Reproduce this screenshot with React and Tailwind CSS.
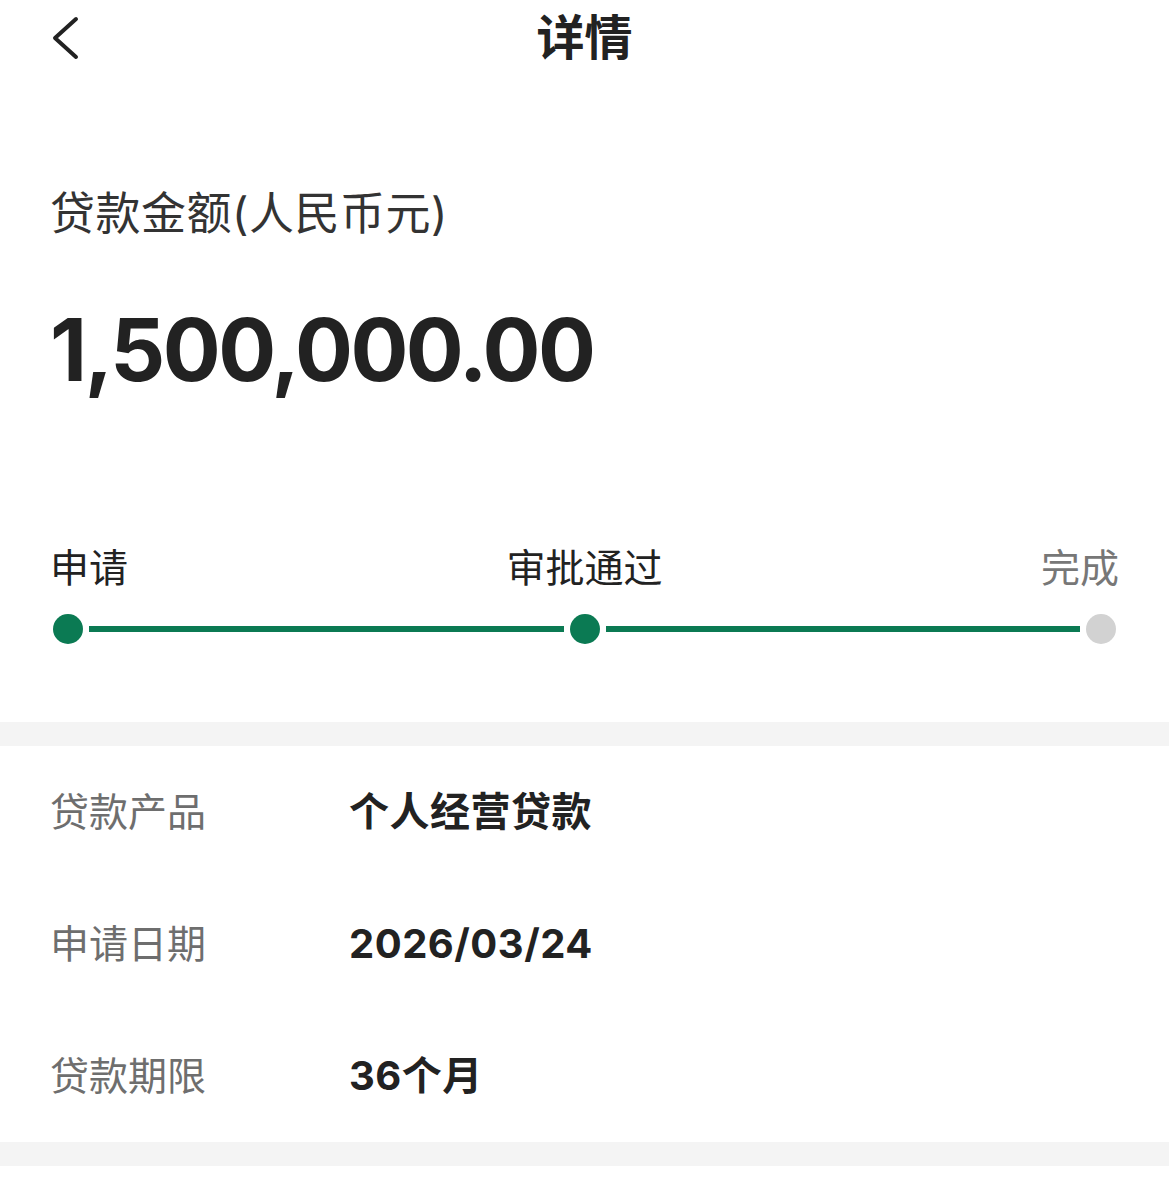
const font = { fontFamily: 'Inter, "Noto Sans CJK SC", sans-serif' }

const rows = [
  { label: '贷款产品', value: '个人经营贷款' },
  { label: '申请日期', value: '2026/03/24' },
  { label: '贷款期限', value: '36个月' },
]

function BackIcon() {
  return (
    <svg width="30" height="44" viewBox="0 0 30 44" fill="none">
      <path d="M26 3 L5 22 L26 41" stroke="#222" strokeWidth="4" strokeLinecap="round" strokeLinejoin="round" />
    </svg>
  )
}

function Dot({ done }) {
  return <div className={`w-[30px] h-[30px] rounded-full shrink-0 ${done ? 'bg-[#0b7a53]' : 'bg-[#d2d2d2]'}`} />
}

function Line() {
  return <div className="flex-1 h-[6px] bg-[#0b7a53]" />
}

export default function App() {
  return (
    <div className="w-[1169px] min-h-[1186px] bg-white text-[#222]" style={font}>
      <header className="h-[76px] grid grid-cols-[1fr_auto_1fr] items-center px-[50px]">
        <div className="flex items-center">
          <BackIcon />
        </div>
        <h1 className="text-[48px] leading-none font-bold">详情</h1>
        <div />
      </header>

      <section className="px-[50px]">
        <div className="mt-[116px] text-[45px] leading-[44px] tracking-[0.5px] text-[#333]">贷款金额(人民币元)</div>
        <div className="mt-[70px] text-[86px] leading-[88px] font-bold tracking-[-2.5px]">1,500,000.00</div>
      </section>

      <section className="mt-[154px]">
        <div className="flex justify-between px-[50px] text-[39px] leading-[39px]">
          <span>申请</span>
          <span>审批通过</span>
          <span className="text-[#777]">完成</span>
        </div>
        <div className="mt-[27px] px-[53px] flex items-center gap-[6px]">
          <Dot done />
          <Line />
          <Dot done />
          <Line />
          <Dot />
        </div>
      </section>

      <div className="mt-[78px] h-[24px] bg-[#f4f4f4]" />

      <section className="px-[50px]">
        {rows.map((r) => (
          <div key={r.label} className="h-[132px] flex items-center">
            <span className="w-[299px] text-[39px] text-[#6e6e6e]">{r.label}</span>
            <span className="text-[40px] font-bold tracking-[0.5px]">{r.value}</span>
          </div>
        ))}
      </section>

      <div className="h-[24px] bg-[#f4f4f4]" />
    </div>
  )
}
